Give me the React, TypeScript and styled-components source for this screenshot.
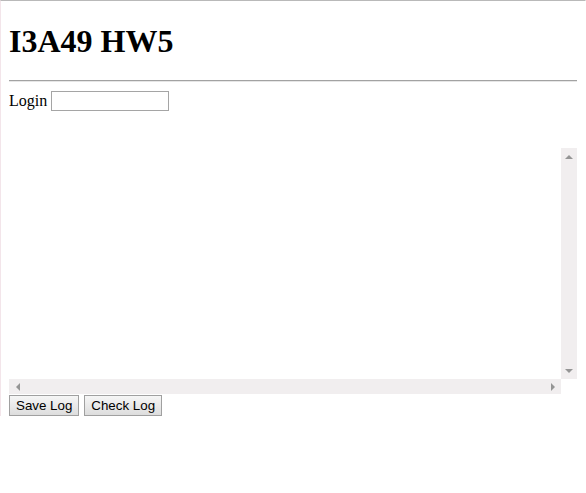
import React from 'react';
import styled, { createGlobalStyle, css } from 'styled-components';

const GlobalStyle = createGlobalStyle`
  html {
    background: #fff;
    border-top: 1px solid #b9b9b9;
    border-left: 1px solid #f3e5ea;
    border-right: 1px solid #fff;
  }
  body {
    margin: 0 8px;
    font-family: 'Liberation Serif', 'Times New Roman', serif;
    font-size: 16px;
    color: #000;
  }
`;

type Dir = 'up' | 'down' | 'left' | 'right';

const ScrollBar = ({ vertical }: { vertical?: boolean }) => (
  <Bar $vertical={vertical}>
    <ArrowCell $vertical={vertical}>
      <Arrow $dir={vertical ? 'up' : 'left'} />
    </ArrowCell>
    <ArrowCell $vertical={vertical}>
      <Arrow $dir={vertical ? 'down' : 'right'} />
    </ArrowCell>
  </Bar>
);

export default function App() {
  return (
    <>
      <GlobalStyle />
      <Title>I3A49 HW5</Title>
      <Rule />
      <LoginRow>
        <span>Login</span>
        <LoginInput type="text" />
      </LoginRow>
      <LogBox>
        <LogArea wrap="off" readOnly />
        <ScrollBar vertical />
        <ScrollBar />
        <Corner />
      </LogBox>
      <Actions>
        <Button>Save Log</Button>
        <Button>Check Log</Button>
      </Actions>
    </>
  );
}

const Title = styled.h1`
  font-size: 32px;
  font-weight: bold;
  margin: 21px 0 20px;
  line-height: 38px;
`;

const Rule = styled.hr`
  margin: 0 0 8px;
  height: 0;
  border: none;
  border-top: 1px solid #a2a2a2;
  border-bottom: 1px solid #e6e6e6;
`;

const LoginRow = styled.div`
  display: flex;
  align-items: center;
  gap: 4px;
  height: 22px;
`;

const LoginInput = styled.input`
  box-sizing: border-box;
  width: 118px;
  height: 20px;
  margin: 0;
  padding: 1px 2px;
  border: 1px solid #a5a5a5;
  background: #fff;
  font: 13.33px 'Liberation Sans', Arial, sans-serif;
`;

const LogBox = styled.div`
  display: grid;
  grid-template-columns: 552px 16px;
  grid-template-rows: 231px 15px;
  width: 568px;
  margin-top: 36px;
`;

const LogArea = styled.textarea`
  display: block;
  box-sizing: border-box;
  width: 100%;
  height: 100%;
  margin: 0;
  padding: 0;
  border: none;
  outline: none;
  resize: none;
  overflow: hidden;
  background: #fff;
  font: 13.33px 'Liberation Mono', monospace;
`;

const Bar = styled.div<{ $vertical?: boolean }>`
  display: flex;
  flex-direction: ${(p) => (p.$vertical ? 'column' : 'row')};
  justify-content: space-between;
  background: #f1eeef;
`;

const ArrowCell = styled.div<{ $vertical?: boolean }>`
  display: flex;
  align-items: center;
  justify-content: center;
  ${(p) =>
    p.$vertical
      ? css`
          height: 17px;
        `
      : css`
          width: 17px;
        `}
`;

const arrowShapes: Record<Dir, ReturnType<typeof css>> = {
  up: css`
    border-left: 4px solid transparent;
    border-right: 4px solid transparent;
    border-bottom: 4px solid #959595;
  `,
  down: css`
    border-left: 4px solid transparent;
    border-right: 4px solid transparent;
    border-top: 4px solid #959595;
  `,
  left: css`
    border-top: 4px solid transparent;
    border-bottom: 4px solid transparent;
    border-right: 4px solid #959595;
  `,
  right: css`
    border-top: 4px solid transparent;
    border-bottom: 4px solid transparent;
    border-left: 4px solid #959595;
  `,
};

const Arrow = styled.span<{ $dir: Dir }>`
  width: 0;
  height: 0;
  ${(p) => arrowShapes[p.$dir]}
`;

const Corner = styled.div`
  background: #fff;
`;

const Actions = styled.div`
  display: flex;
  gap: 5px;
  margin-top: 1px;
`;

const Button = styled.button`
  box-sizing: border-box;
  height: 21px;
  margin: 0;
  padding: 1px 6px;
  border: 1px solid #a0a0a0;
  border-radius: 0;
  background: linear-gradient(#f6f6f6, #dddddd);
  color: #000;
  font: 13.33px 'Liberation Sans', Arial, sans-serif;
`;
